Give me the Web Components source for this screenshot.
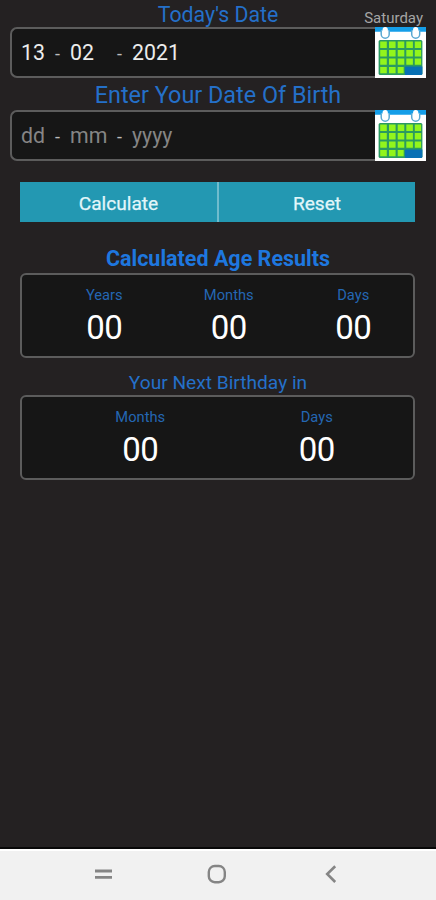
<!DOCTYPE html>
<html lang="en">
<head>
<meta charset="utf-8">
<title>Age Calculator</title>
<style>
html,body{margin:0;height:100%;background:#242122}
body{font-family:Roboto,"Liberation Sans",sans-serif;overflow:hidden}
</style>
</head>
<body>
<age-app></age-app>
<script>
function define(name, html){
  const t=document.createElement('template');
  t.innerHTML=html;
  customElements.define(name,class extends HTMLElement{
    constructor(){super();this.attachShadow({mode:'open'}).append(t.content.cloneNode(true));}
  });
}

define('calendar-icon',`
<style>:host{display:block;width:51px;height:51px}svg{display:block}</style>
<svg width="51" height="51" viewBox="0 0 51 51">
  <path fill="#fff" d="M0 0h51v51H0z"/>
  <path fill="#159ee8" d="M0 0h51v4.8H0z"/>
  <g fill="#fff" stroke="#5aa9d3" stroke-width="1.5">
    <path d="M6.200 3.500v3.700a4 4 0 0 0 8 0V3.500"/>
    <path d="M36.700 3.500v3.700a4 4 0 0 0 8 0V3.500"/>
  </g>
  <rect x="7.600" y="0" width="5.200" height="9.500" rx="2.500" fill="#fff"/>
  <rect x="38.100" y="0" width="5.200" height="9.500" rx="2.500" fill="#fff"/>
  <rect x="3.600" y="13" width="43.800" height="35" rx="1.500" fill="#2a9a60"/>
  <path fill="#0870b4" d="M30 39.500h17.400V46.500a1.500 1.500 0 0 1-1.500 1.500H30z"/>
  <g fill="#92f51c">
    <path d="M5.200 14.500h6.600v6.600H5.200zm8.800 0h6.600v6.600H14zm8.700 0h6.600v6.600h-6.600zm8.600 0h6.600v6.600h-6.600zm8.500 0h6.300v6.600h-6.300z"/>
    <path d="M5.200 23h6.600v6.600H5.200zm8.800 0h6.600v6.600H14zm8.700 0h6.600v6.600h-6.600zm8.600 0h6.600v6.600h-6.600zm8.500 0h6.300v6.600h-6.300z"/>
    <path d="M5.200 31.500h6.600v6.300H5.200zm8.800 0h6.600v6.300H14zm8.700 0h6.600v6.300h-6.600zm8.600 0h6.600v6.300h-6.600zm8.500 0h6.300v6.300h-6.300z"/>
    <path d="M5.200 40h6.600v6.300H5.200zm8.800 0h6.600v6.300H14zm8.700 0h6v6.300h-6z"/>
  </g>
</svg>`);

define('section-title',`
<style>:host{display:flex;align-items:center;justify-content:center;color:#2470c9;white-space:nowrap}</style><slot></slot>`);

define('date-field',`
<style>
:host{display:flex;height:51px;margin:0 10px;color:#ececec;font-size:21.3px}
.box{flex:1;display:grid;grid-template-columns:33px 16px 46px 16px 1fr;align-items:center;box-sizing:border-box;
 border:2px solid #5c5c5c;border-right:0;border-radius:7px 0 0 7px;background:#161616;padding:1px 0 0 9px;line-height:1}
.sep{color:#bbb;font-size:18px;padding:2px 0 0 1px}
</style>
<div class="box"><slot name="day"></slot><span class="sep">-</span><slot name="month"></slot><span class="sep">-</span><slot name="year"></slot></div>
<calendar-icon></calendar-icon>`);

define('action-button',`
<style>:host{display:flex;align-items:center;justify-content:center;background:#2398b2;color:#e2f6fa;font-size:19.100px;-webkit-text-stroke:.25px #e2f6fa;height:40px;padding-top:2px;box-sizing:border-box}</style><slot></slot>`);

define('result-panel',`
<style>:host{display:grid;grid-auto-flow:column;grid-auto-columns:1fr;box-sizing:border-box;margin:0 20px;height:85px;width:395px;border:2px solid #5c5c5c;border-radius:6px;background:#161616}</style><slot></slot>`);

define('result-value',`
<style>
:host{display:flex;flex-direction:column;align-items:center}
.l{margin-top:11px;height:18px;line-height:18px;font-size:14.700px;color:#2467b3}
.v{margin-top:4px;height:40px;line-height:40px;font-size:33px;letter-spacing:-.6px;color:#fff}
</style><span class="l"><slot></slot></span><span class="v"><slot name="value"></slot></span>`);

define('nav-bar',`
<style>:host{display:block;height:49px;border-top:2px solid #fff;background:#f1f1f1}svg{display:block}</style>
<svg width="436" height="49" viewBox="0 851 436 49" fill="none" stroke="#858585" stroke-width="2.400">
 <path stroke-width="2.800" d="M95 871h17M95 877.300h17"/>
 <rect x="208.800" y="866" width="16" height="16.200" rx="6"/>
 <path stroke-width="2.600" d="M335.200 866.200L327.200 874l8 8"/>
</svg>`);

define('age-app',`
<style>
:host{display:flex;flex-direction:column;height:900px;width:436px;background:#242122}
header{display:grid;grid-template-columns:1fr auto 1fr;height:27px}
header section-title{grid-column:2;font-size:21.300px;height:28px}
.day{justify-self:end;margin-right:13px;font-size:15px;line-height:18px;padding-top:9px;color:#a5a5a5;height:18px}
.dob{height:32px;font-size:23.400px;padding-top:1px;box-sizing:border-box}
.hint{color:#858585}
.buttons{display:grid;grid-template-columns:197px 196px;gap:2px;margin:21px 20px 0;background:#70bccd;width:395px}
.res{margin-top:22px;height:29px;font-size:21.500px;font-weight:700;color:#1e77df}
.next{height:37px;padding-top:12px;box-sizing:border-box;font-size:19.150px}
.three{padding-left:20px;grid-auto-columns:124.500px}
.two{padding:0 8px 0 30px}
nav-bar{margin-top:auto;outline:2px solid #080808;clip-path:inset(-2px 0 0)}
</style>
<header><section-title>Today's Date</section-title><span class="day">Saturday</span></header>
<date-field><span slot="day">13</span><span slot="month">02</span><span slot="year">2021</span></date-field>
<section-title class="dob">Enter Your Date Of Birth</section-title>
<date-field><span slot="day" class="hint">dd</span><span slot="month" class="hint">mm</span><span slot="year" class="hint">yyyy</span></date-field>
<div class="buttons"><action-button>Calculate</action-button><action-button>Reset</action-button></div>
<section-title class="res">Calculated Age Results</section-title>
<result-panel class="three">
 <result-value>Years<span slot="value">00</span></result-value>
 <result-value>Months<span slot="value">00</span></result-value>
 <result-value>Days<span slot="value">00</span></result-value>
</result-panel>
<section-title class="next">Your Next Birthday in</section-title>
<result-panel class="two">
 <result-value>Months<span slot="value">00</span></result-value>
 <result-value>Days<span slot="value">00</span></result-value>
</result-panel>
<nav-bar></nav-bar>`);
</script>
</body>
</html>
